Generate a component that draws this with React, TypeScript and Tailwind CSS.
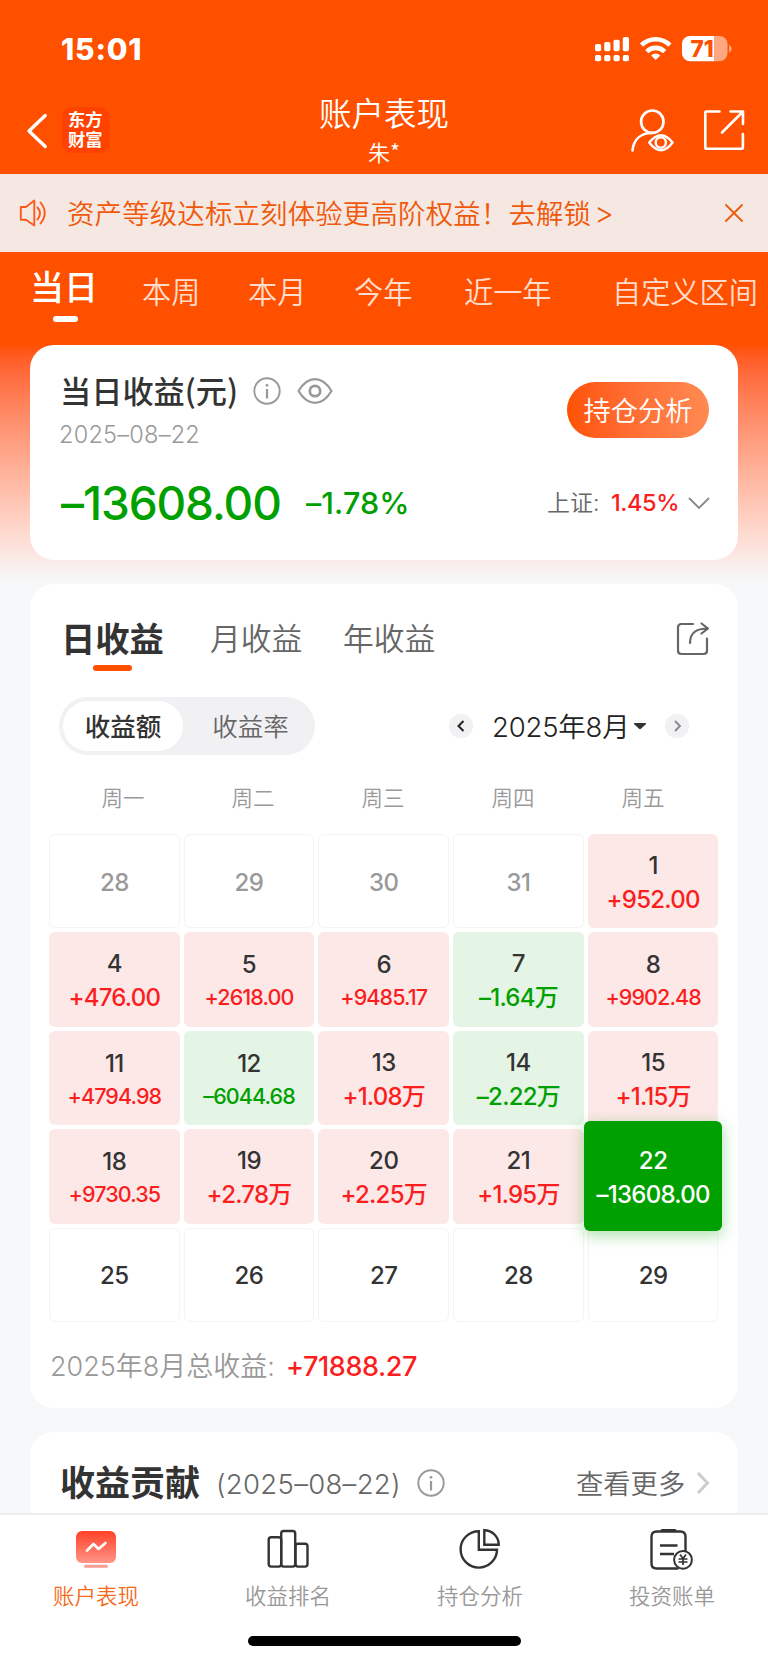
import React from "react";

type Tone = "none" | "muted" | "up" | "down" | "active";
type Day = { day: string; value?: string; tone: Tone; small?: boolean };

const days: Day[] = [
  { day: "28", tone: "muted" },
  { day: "29", tone: "muted" },
  { day: "30", tone: "muted" },
  { day: "31", tone: "muted" },
  { day: "1", value: "+952.00", tone: "up" },
  { day: "4", value: "+476.00", tone: "up" },
  { day: "5", value: "+2618.00", tone: "up", small: true },
  { day: "6", value: "+9485.17", tone: "up", small: true },
  { day: "7", value: "–1.64万", tone: "down" },
  { day: "8", value: "+9902.48", tone: "up", small: true },
  { day: "11", value: "+4794.98", tone: "up", small: true },
  { day: "12", value: "–6044.68", tone: "down", small: true },
  { day: "13", value: "+1.08万", tone: "up" },
  { day: "14", value: "–2.22万", tone: "down" },
  { day: "15", value: "+1.15万", tone: "up" },
  { day: "18", value: "+9730.35", tone: "up", small: true },
  { day: "19", value: "+2.78万", tone: "up" },
  { day: "20", value: "+2.25万", tone: "up" },
  { day: "21", value: "+1.95万", tone: "up" },
  { day: "22", value: "–13608.00", tone: "active" },
  { day: "25", tone: "none" },
  { day: "26", tone: "none" },
  { day: "27", tone: "none" },
  { day: "28", tone: "none" },
  { day: "29", tone: "none" },
];

function StatusIcons() {
  return (
    <svg width="140" height="30" viewBox="592 34 140 30" fill="#fff">
      <rect x="595" y="44" width="6.2" height="7.3" rx="1.8" />
      <rect x="604.2" y="42" width="6.2" height="9.3" rx="1.8" />
      <rect x="613.5" y="39.8" width="6.2" height="11.5" rx="1.8" />
      <rect x="622.8" y="37" width="6.2" height="14.3" rx="1.8" />
      <rect x="595" y="55" width="6.2" height="6.2" rx="1.8" />
      <rect x="604.2" y="55" width="6.2" height="6.2" rx="1.8" />
      <rect x="613.5" y="55" width="6.2" height="6.2" rx="1.8" />
      <rect x="622.8" y="55" width="6.2" height="6.2" rx="1.8" />
      <g fill="none" stroke="#fff" strokeWidth="4.6">
        <path d="M641.5 45.200a20 20 0 0 1 28.400 0" />
        <path d="M646.800 51.600a12.600 12.600 0 0 1 17.800 0" />
      </g>
      <path d="M655.700 60l-4.600-4.600a6.600 6.600 0 0 1 9.200 0z" />
      <path d="M714 36h5.500a8 8 0 0 1 8 8v9.300a8 8 0 0 1-8 8H714z" fill="#ffa77f" />
      <path d="M714 36h-24a8 8 0 0 0-8 8v9.300a8 8 0 0 0 8 8h24z" />
      <path d="M729 44.800q2.700 1.500 2.700 4t-2.700 4z" fill="#ffa77f" />
      <text x="690.500" y="56.800" fontFamily="Inter" fontWeight="800" fontSize="22.500" letterSpacing="0" fill="#ff5000">71</text>
    </svg>
  );
}

function InfoIcon() {
  return (
    <svg className="shrink-0" width="28" height="28" viewBox="0 0 28 28" fill="none" stroke="#999" strokeWidth="1.900">
      <circle cx="14" cy="14" r="12.700" />
      <path d="M14 12v9.500" strokeWidth="2.200" />
      <circle cx="14" cy="8.300" r="1.400" fill="#999" stroke="none" />
    </svg>
  );
}

function StatusBar() {
  return (
    <div className="flex h-[88px] items-start pt-[34px]">
      <span className="ml-[61px] w-[531px] font-[Inter] text-[30px] leading-[30px] font-extrabold tracking-[0.800px] text-white">15:01</span>
      <StatusIcons />
    </div>
  );
}

function Header() {
  return (
    <div className="flex h-[86px]">
      <svg className="mt-[24px] ml-[24px] shrink-0" width="26" height="38" viewBox="24 112 26 38" fill="none" stroke="#fff" strokeWidth="3.400" strokeLinecap="round" strokeLinejoin="round">
        <path d="M45.200 115.500L29 131l16.200 15.500" />
      </svg>
      <div className="mt-[19px] ml-[12px] flex h-[46px] w-[47px] shrink-0 items-center justify-center rounded-[9px] bg-[#ff4200]">
        <span className="-mt-[2px] w-[35px] text-[17.300px] leading-[20px] font-bold break-all text-white">东方财富</span>
      </div>
      <div className="ml-[175px] flex w-[200px] shrink-0 flex-col items-center text-white">
        <span className="mt-[3px] text-[32.500px] leading-[42px] font-[350]">账户表现</span>
        <span className="mt-[4px] text-[22px] leading-[28px] font-[350]">朱*</span>
      </div>
      <svg className="mt-[16px] ml-[144px] shrink-0" width="122" height="54" viewBox="628 104 122 54" fill="none" stroke="#fff" strokeWidth="2.700" strokeLinecap="round" strokeLinejoin="round">
        <circle cx="652.300" cy="121.700" r="11.200" />
        <path d="M632.500 150.300c1.200-10 7.500-17.300 19.500-17.300" />
        <path d="M649.200 142.500q11.800-14.500 23.400 0q-11.600 15.500-23.400 0z" strokeWidth="2.400" />
        <circle cx="660.800" cy="142.500" r="5.100" strokeWidth="2.400" />
        <path d="M719.500 111.500h-13.200q-1 0-1 1v35.200q0 1 1 1h35.600q1 0 1-1V134M722 132.500l20.500-20.500M730.500 111.500h12.500V124" strokeWidth="2.600" />
      </svg>
    </div>
  );
}

function Banner() {
  return (
    <div className="flex h-[78px] items-center bg-[#f5e8e3] text-[#f0580a]">
      <svg className="ml-[18px] shrink-0" width="32" height="32" viewBox="0 0 32 32" fill="none" stroke="#ff5a1a" strokeWidth="1.900" strokeLinecap="round" strokeLinejoin="round">
        <path d="M2.800 10H8l8.300-6.500v25L8 22.700H2.800z" />
        <path d="M19.500 10.500q5 5.500 0 12M22.500 5.500q8.500 10.500 0 21" />
      </svg>
      <span className="-mt-[3px] ml-[17px] w-[656px] shrink-0 text-[27.450px] leading-[40px] font-[350] tracking-[0.150px] whitespace-nowrap">
        资产等级达标立刻体验更高阶权益！去解锁<span className="ml-[3px] font-[Inter] text-[30px] leading-[30px] font-light">&gt;</span>
      </span>
      <svg className="shrink-0" width="22" height="22" viewBox="0 0 22 22" stroke="#f0580a" strokeWidth="1.800" strokeLinecap="round">
        <path d="M3 3l16 16M19 3L3 19" />
      </svg>
    </div>
  );
}

function PeriodTabs() {
  return (
    <div className="flex h-[93px] shrink-0 pt-[10px] text-[29.200px] leading-[56px] font-[350] whitespace-nowrap text-[#ffddcc]">
      <div className="flex w-[111px] shrink-0 flex-col pl-[30px]">
        <span className="h-[54px] pt-px text-[34px] leading-[46px] font-medium text-white">当日</span>
        <span className="ml-[23px] h-[6px] w-[25px] rounded-full bg-white" />
      </div>
      <span className="w-[106px] shrink-0 pl-[31px]">本周</span>
      <span className="w-[106px] shrink-0 pl-[31px]">本月</span>
      <span className="w-[109px] shrink-0 pl-[31px]">今年</span>
      <span className="w-[180px] shrink-0 pl-[32px]">近一年</span>
      <span className="shrink-0">自定义区间</span>
    </div>
  );
}

function SummaryCard() {
  return (
    <section className="mx-[30px] flex h-[215px] shrink-0 flex-col rounded-[24px] bg-white">
      <div className="flex h-[105px]">
        <div className="w-[537px] pl-[30px]">
          <div className="mt-[25px] flex h-[42px] items-center">
            <span className="-mt-[3px] w-[193px] text-[31.200px] leading-[42px] font-medium whitespace-nowrap text-[#333]">当日收益(元)</span>
            <InfoIcon />
            <svg className="ml-[15px]" width="38" height="30" viewBox="0 0 38 30" fill="none" stroke="#999" strokeWidth="2.200">
              <path d="M2.500 15C12-.800 26-.800 35.500 15C26 30.800 12 30.800 2.500 15z" strokeLinejoin="round" />
              <circle cx="19" cy="15" r="5.200" strokeWidth="2.700" />
            </svg>
          </div>
          <div className="mt-[8px] -ml-px font-[Inter] text-[23.500px] leading-[30px] font-light tracking-[0.250px] text-[#999]">2025–08–22</div>
        </div>
        <div className="mt-[37px] flex h-[56px] w-[142px] items-center justify-center rounded-full bg-linear-to-r from-[#ff5200] to-[#ff8a52] pb-[3px] text-[27.300px] leading-[40px] font-[350] text-white">
          持仓分析
        </div>
      </div>
      <div className="flex h-[106px] items-center pl-[31px] leading-[50px] whitespace-nowrap">
        <span className="w-[245px] font-[Inter] text-[46px] font-medium tracking-[-1.100px] text-[#00a000]">–13608.00</span>
        <span className="w-[241px] font-[Inter] text-[30.500px] font-medium tracking-[0.100px] text-[#00a000]">–1.78%</span>
        <span className="-mt-px w-[64px] font-[Inter,'Noto_Sans_CJK_SC'] text-[23px] font-[350] text-[#666]">上证:</span>
        <span className="w-[77px] font-[Inter] text-[23.500px] font-medium tracking-[-0.400px] text-[#fa1e1e]">1.45%</span>
        <svg width="22" height="16" viewBox="0 0 22 16" fill="none" stroke="#888" strokeWidth="1.800">
          <path d="M1 3l10 10L21 3" />
        </svg>
      </div>
    </section>
  );
}

function CalendarCell({ item }: { item: Day }) {
  if (item.tone === "active") {
    return (
      <div className="relative z-10 -mx-[4px] -mt-[8px] -mb-[7px] flex flex-col items-center rounded-[6px] bg-[#00a000] pt-[25px] text-white shadow-[0_4px_16px_rgba(0,160,0,0.350)]">
        <span className="text-[24px] leading-[30px] font-medium tracking-[-0.500px]">{item.day}</span>
        <span className="mt-[4px] text-[24px] leading-[30px] font-medium tracking-[-0.700px]">{item.value}</span>
      </div>
    );
  }
  if (!item.value) {
    return (
      <div className={`flex items-center justify-center rounded-[6px] border border-[#f4f4f5] pt-[3px] text-[24px] font-medium tracking-[-0.500px] ${item.tone === "muted" ? "text-[#999]" : "text-[#333]"}`}>
        {item.day}
      </div>
    );
  }
  return (
    <div className={`flex flex-col items-center rounded-[6px] ${item.tone === "up" ? "bg-[#fde8e8] text-[#fa1e1e]" : "bg-[#e4f4e5] text-[#00a000]"}`}>
      <span className={`text-[24px] leading-[30px] font-medium tracking-[-0.500px] text-[#333] ${item.small ? "mt-[18px]" : "mt-[17px]"}`}>{item.day}</span>
      <span className={item.small ? "mt-[3px] text-[21.500px] leading-[28px] font-medium tracking-[-0.900px]" : "mt-[4px] text-[24px] leading-[30px] font-medium tracking-[-0.750px]"}>{item.value}</span>
    </div>
  );
}

function CalendarCard() {
  return (
    <section className="mx-[30px] mt-[24px] flex h-[824px] shrink-0 flex-col rounded-[24px] bg-white">
      <div className="flex h-[113px] pt-[31px] leading-[44px] whitespace-nowrap">
        <div className="ml-[31px] w-[149px]">
          <div className="h-[50px] text-[34.300px] font-bold text-[#333]">日收益</div>
          <div className="ml-[32px] h-[6px] w-[39px] rounded-full bg-[#ff5000]" />
        </div>
        <span className="w-[133px] text-[30.800px] font-[350] text-[#666]">月收益</span>
        <span className="w-[333px] text-[30.800px] font-[350] text-[#666]">年收益</span>
        <svg className="mt-[6px]" width="34" height="36" viewBox="0 0 34 36" fill="none" stroke="#666" strokeWidth="2.200" strokeLinecap="round" strokeLinejoin="round">
          <path d="M17 3H5.500q-3.500 0-3.500 3.500v23q0 3.500 3.500 3.500h22q3.500 0 3.500-3.500V17.500" />
          <path d="M14 22C14 12 20 7.500 32 7.500M25.500 2.500l6.500 5-6.500 5" />
        </svg>
      </div>
      <div className="flex h-[58px] items-center">
        <div className="ml-[29px] flex h-[58px] w-[256px] rounded-full bg-[#f1f1f4] p-[4px] text-[25.500px] leading-[47px]">
          <span className="w-[120px] shrink-0 rounded-full bg-white text-center font-medium text-[#333]">收益额</span>
          <span className="w-[128px] shrink-0 pl-[7px] text-center font-[350] text-[#666]">收益率</span>
        </div>
        <div className="ml-[134px] flex h-[24px] w-[24px] items-center justify-center rounded-full bg-[#f1f1f4]">
          <svg width="12" height="14" viewBox="0 0 12 14" fill="none" stroke="#222" strokeWidth="2"><path d="M8.500 2L3.500 7l5 5" /></svg>
        </div>
        <span className="mt-[2px] ml-[19px] w-[141px] font-[Inter,'Noto_Sans_CJK_SC'] text-[27.500px] leading-[40px] font-[350] tracking-[-0.200px] whitespace-nowrap text-[#222]">2025年8月</span>
        <svg width="14" height="8" viewBox="0 0 14 8" fill="#333"><path d="M1.500 1h11q1 .3.200 1.200L8 6.700q-1 .9-2 0L1.300 2.200Q.5 1.300 1.500 1z" /></svg>
        <div className="ml-[18px] flex h-[24px] w-[24px] items-center justify-center rounded-full bg-[#f1f1f4]">
          <svg width="12" height="14" viewBox="0 0 12 14" fill="none" stroke="#888" strokeWidth="1.800"><path d="M4 2l5 5-5 5" /></svg>
        </div>
      </div>
      <div className="ml-[28px] grid w-[650px] grid-cols-5 pt-[26px] text-center text-[21.500px] leading-[32px] font-[350] text-[#999]">
        {["周一", "周二", "周三", "周四", "周五"].map((d) => (
          <span key={d}>{d}</span>
        ))}
      </div>
      <div className="mt-[21px] ml-[19px] grid h-[488px] w-[669.500px] grid-cols-5 grid-rows-5 gap-[4px] font-[Inter,'Noto_Sans_CJK_SC']">
        {days.map((item, i) => (
          <CalendarCell key={i} item={item} />
        ))}
      </div>
      <div className="mt-[24px] ml-[20px] flex font-[Inter,'Noto_Sans_CJK_SC'] text-[27px] leading-[42px] whitespace-nowrap">
        <span className="w-[236px] font-[350] text-[#999]">2025年8月总收益:</span>
        <span className="font-medium tracking-[-0.400px] text-[#fa1e1e]">+71888.27</span>
      </div>
    </section>
  );
}

function ContributionCard() {
  return (
    <section className="mx-[30px] mt-[24px] flex h-[81px] shrink-0 items-start rounded-t-[24px] bg-white pt-[26px] leading-[50px] whitespace-nowrap">
      <span className="-mt-[2px] ml-[30px] w-[156px] text-[35px] font-bold text-[#333]">收益贡献</span>
      <span className="w-[201px] pt-px font-[Inter] text-[27.500px] font-light tracking-[0.300px] text-[#666]">(2025–08–22)</span>
      <div className="flex h-[50px] w-[159px] items-center">
        <InfoIcon />
      </div>
      <span className="-mt-px w-[120px] text-[27.300px] font-[350] text-[#666]">查看更多</span>
      <svg className="mt-[13px]" width="14" height="24" viewBox="0 0 14 24" fill="none" stroke="#ccc" strokeWidth="3"><path d="M2 2l9.500 10L2 22" /></svg>
    </section>
  );
}

function PerformanceIcon() {
  return (
    <svg width="44" height="44" viewBox="0 0 44 44" fill="none">
      <defs>
        <linearGradient id="screen" x1="0" y1="0" x2="0" y2="1">
          <stop stopColor="#ff4228" />
          <stop offset="1" stopColor="#ff9488" />
        </linearGradient>
      </defs>
      <rect x="2" y="4" width="40" height="32" rx="6" fill="url(#screen)" />
      <rect x="10" y="37.700" width="24" height="3" rx="1.500" fill="#ff9a90" />
      <path d="M13 23.500l6.500-6.500 5 5 7-6" stroke="#fff" strokeWidth="2.600" strokeLinecap="round" strokeLinejoin="round" />
    </svg>
  );
}

function RankIcon() {
  return (
    <svg width="44" height="44" viewBox="0 0 44 44" fill="none" stroke="#333" strokeWidth="2.400">
      <rect x="2.700" y="10.300" width="12.500" height="29.300" rx="2.500" />
      <rect x="15.200" y="4" width="14" height="35.600" rx="2.500" />
      <rect x="29.500" y="16.800" width="12" height="22.800" rx="2.500" />
    </svg>
  );
}

function PieIcon() {
  return (
    <svg width="44" height="44" viewBox="0 0 44 44" fill="none" stroke="#333" strokeWidth="2.400">
      <path d="M20.800 4.200A18.200 18.200 0 1 0 39 22.700H20.800z" />
      <path d="M26.300 3.200v14.500h14.400A14.500 14.500 0 0 0 26.300 3.200z" />
    </svg>
  );
}

function BillIcon() {
  return (
    <svg width="44" height="44" viewBox="0 0 44 44" fill="none" stroke="#333" strokeWidth="2.400">
      <path d="M35.500 24V9.500q0-5-5-5h-24q-5 0-5 5v27q0 5 5 5h22" />
      <path d="M12 3.500h13" strokeWidth="3" strokeLinecap="round" />
      <path d="M10 18.500h17.500M10 27h14" strokeWidth="2.500" />
      <circle cx="33" cy="32.800" r="8.900" fill="#fff" strokeWidth="2" />
      <path d="M30 27.500l3 4 3-4M33 31.500v6.500M28.500 32h9M28.500 35h9" strokeWidth="1.700" />
    </svg>
  );
}

function TabBar() {
  const tabs = [
    { label: "账户表现", icon: <PerformanceIcon /> },
    { label: "收益排名", icon: <RankIcon /> },
    { label: "持仓分析", icon: <PieIcon /> },
    { label: "投资账单", icon: <BillIcon /> },
  ];
  return (
    <nav className="flex h-[150px] shrink-0 flex-col items-center border-t-2 border-[#eee] bg-white">
      <div className="grid h-[121px] w-full grid-cols-4">
        {tabs.map((t, i) => (
          <div key={t.label} className="flex flex-col items-center pt-[12px]">
            {t.icon}
            <span className={`mt-[8px] text-[21.500px] leading-[32px] font-[350] ${i === 0 ? "text-[#f56a1a]" : "text-[#999]"}`}>{t.label}</span>
          </div>
        ))}
      </div>
      <div className="h-[10px] w-[273px] rounded-full bg-black" />
    </nav>
  );
}

export default function App() {
  return (
    <main className="flex h-[1663px] w-[768px] flex-col overflow-hidden bg-[#f6f8fa] font-['Noto_Sans_CJK_SC',sans-serif]">
      <div className="flex shrink-0 flex-col bg-linear-to-b from-[#ff5000] from-[345px] to-[#f6f8fa] to-[582px]">
        <StatusBar />
        <Header />
        <Banner />
        <PeriodTabs />
        <SummaryCard />
        <CalendarCard />
      </div>
      <ContributionCard />
      <TabBar />
    </main>
  );
}
